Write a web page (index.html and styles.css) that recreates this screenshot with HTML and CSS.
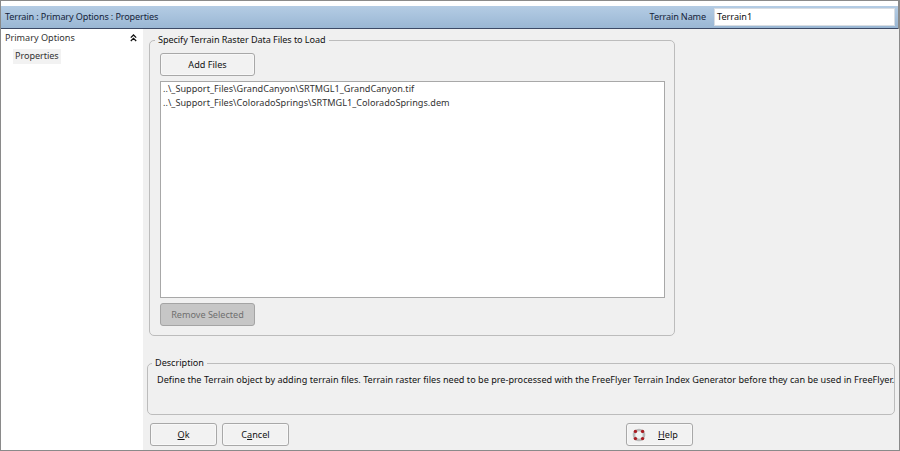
FILE: index.html
```html
<!DOCTYPE html>
<html lang="en">
<head>
<meta charset="utf-8">
<title>Terrain</title>
<link rel="stylesheet" href="styles.css">
</head>
<body>
<div class="window">
  <header class="titlebar">
    <div class="crumb">Terrain : Primary Options : Properties</div>
    <label class="name-label">Terrain Name</label>
    <div class="name-input">Terrain1</div>
  </header>
  <div class="content">
    <aside class="sidebar">
      <div class="tree-head">
        <span>Primary Options</span>
        <svg class="chev" width="7" height="8" viewBox="0 0 7 8"><path d="M.8 3.6 3.5 1l2.7 2.6M.8 7 3.5 4.4 6.2 7" fill="none" stroke="#111" stroke-width="1.3"/></svg>
      </div>
      <div class="tree-item">Properties</div>
    </aside>
    <main class="main">
      <fieldset class="group files">
        <legend>Specify Terrain Raster Data Files to Load</legend>
        <button class="btn wide">Add Files</button>
        <div class="filelist">
          <div>..\_Support_Files\GrandCanyon\SRTMGL1_GrandCanyon.tif</div>
          <div>..\_Support_Files\ColoradoSprings\SRTMGL1_ColoradoSprings.dem</div>
        </div>
        <button class="btn wide disabled">Remove Selected</button>
      </fieldset>
      <fieldset class="group desc">
        <legend>Description</legend>
        <p>Define the Terrain object by adding terrain files. Terrain raster files need to be pre-processed with the FreeFlyer Terrain Index Generator before they can be used in FreeFlyer.</p>
      </fieldset>
      <div class="actions">
        <button class="btn small"><u>O</u>k</button>
        <button class="btn small">C<u>a</u>ncel</button>
        <button class="btn small help">
          <svg width="14" height="14" viewBox="0 0 14 14"><circle cx="7" cy="7" r="5" fill="none" stroke="#b9b9b9" stroke-width="2.6"/><g fill="#a81c22"><circle cx="3.4" cy="3.4" r="1.7"/><circle cx="10.6" cy="3.4" r="1.7"/><circle cx="3.4" cy="10.6" r="1.7"/><circle cx="10.6" cy="10.6" r="1.7"/></g></svg>
          <span><u>H</u>elp</span>
        </button>
      </div>
    </main>
  </div>
</div>
</body>
</html>
```

FILE: styles.css
```css
* { box-sizing: border-box; }
html, body { margin: 0; padding: 0; }
body {
  width: 900px;
  height: 451px;
  overflow: hidden;
  font-family: "Noto Sans", "Open Sans", sans-serif;
  font-size: 9.1px;
  line-height: 14px;
  color: #111;
}
.window {
  width: 900px;
  height: 451px;
  border: 1px solid #8a8a8a;
  border-right-width: 2px;
  background: #fff;
  padding-top: 5px;
  display: flex;
  flex-direction: column;
}
.titlebar {
  height: 23px;
  flex: none;
  display: flex;
  align-items: center;
  padding: 0 3px 1px 4px;
  background: linear-gradient(#b4cce4, #9ab7d4);
  border-bottom: 1px solid #3c4a66;
  color: #15233a;
  letter-spacing: -0.13px;
}
.crumb { flex: 1; }
.name-label { margin-right: 8px; }
.name-input {
  width: 181px;
  height: 18px;
  background: #fff;
  border: 1px solid #d8dde3;
  padding: 1px 2px;
  color: #111;
  letter-spacing: 0;
}
.content { flex: 1; display: flex; min-height: 0; }
.sidebar { width: 142px; flex: none; background: #fff; padding: 2px 4px 0 4px; }
.tree-head { display: flex; justify-content: space-between; align-items: center; height: 14px; padding-right: 2px; color: #333; }
.tree-item {
  display: inline-block;
  margin: 4px 0 0 8px;
  padding: 0 2px;
  height: 15px;
  background: #f2f2f2;
  color: #333;
  letter-spacing: -0.05px;
}
.main {
  flex: 1;
  background: #f0f0f0;
  padding: 0 4px 0 4px;
  display: flex;
  flex-direction: column;
}
.group {
  margin: 0;
  min-width: 0;
  border: 1px solid #bcbcbc;
  border-radius: 5px;
}
.group legend { padding: 0 3px; line-height: 14px; }
.files {
  width: 526px;
  height: 303px;
  margin: 4px 0 0 2px;
  padding: 6px 9px 0 10px;
  display: flex;
  flex-direction: column;
}
.files legend { margin-left: -5px; letter-spacing: -0.07px; }
.btn {
  font: inherit;
  color: #111;
  background: #f2f2f2;
  border: 1px solid #a8a8a8;
  border-radius: 3px;
  padding: 0;
  box-shadow: inset 0 0 0 1px #f8f8f8;
}
.wide { width: 95px; height: 23px; flex: none; }
.disabled { background: #c6c6c6; color: #6f6f6f; border-color: #a4a4a4; box-shadow: none; }
.filelist {
  width: 505px;
  height: 217px;
  flex: none;
  margin: 5px 0;
  background: #fff;
  border: 1px solid #a8a8a8;
  padding: 0 2px;
  color: #333;
  line-height: 13.5px;
  letter-spacing: 0.03px;
}
.desc {
  width: 748px;
  height: 59px;
  margin: 20px 0 0 0;
  padding: 0 8px;
}
.desc legend { margin-left: -4px; }
.desc p { margin: 3px 0 0 1px; white-space: nowrap; letter-spacing: 0.012px; }
.actions { display: flex; margin: 8px 0 0 3px; gap: 5px; }
.small { width: 67px; height: 23px; }
.help {
  margin-left: 332px;
  display: flex;
  align-items: center;
  gap: 12px;
  padding-left: 5px;
}
```
